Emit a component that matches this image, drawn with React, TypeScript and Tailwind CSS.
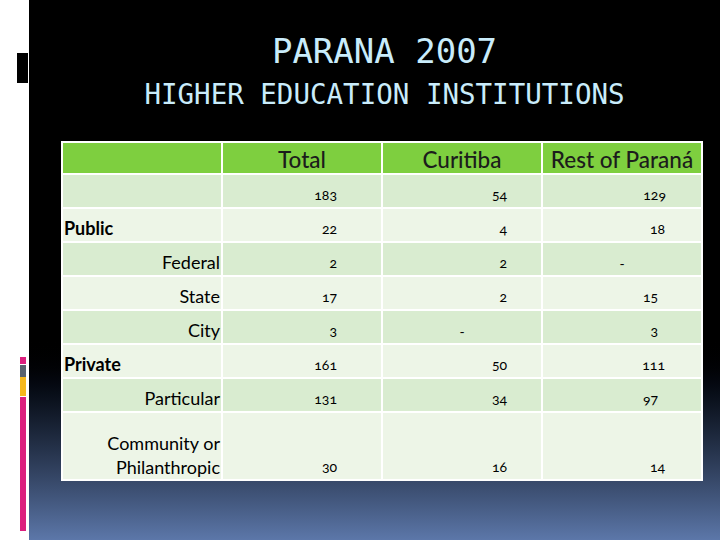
import React from "react";

type Row = {
  label: string;
  group?: boolean;
  total: string;
  curitiba: string;
  rest: string;
  restPad: string;
  dark: boolean;
  tall?: boolean;
};

const ROWS: Row[] = [
  { label: "", total: "183", curitiba: "54", rest: "129", restPad: "pr-[35px]", dark: true },
  { label: "Public", group: true, total: "22", curitiba: "4", rest: "18", restPad: "pr-[36px]", dark: false },
  { label: "Federal", total: "2", curitiba: "2", rest: "-", restPad: "pr-0", dark: true },
  { label: "State", total: "17", curitiba: "2", rest: "15", restPad: "pr-[43px]", dark: false },
  { label: "City", total: "3", curitiba: "-", rest: "3", restPad: "pr-[43px]", dark: true },
  { label: "Private", group: true, total: "161", curitiba: "50", rest: "111", restPad: "pr-[36px]", dark: false },
  { label: "Particular", total: "131", curitiba: "34", rest: "97", restPad: "pr-[43px]", dark: true },
  { label: "Community or\nPhilanthropic", total: "30", curitiba: "16", rest: "14", restPad: "pr-[36px]", dark: false, tall: true },
];

function NumCell({ value, pad, row }: { value: string; pad: string; row: Row }) {
  const isDash = value === "-";
  return (
    <div
      className={`flex items-end text-[14px] leading-none oldstyle-nums ${
        isDash ? "justify-center pb-[4px]" : `justify-end pb-[5px] ${pad}`
      } ${row.dark ? "bg-[#d9ecd0]" : "bg-[#edf5e7]"}`}
    >
      {value}
    </div>
  );
}

export default function App() {
  return (
    <div className="flex h-[540px] w-[720px] overflow-hidden bg-white">
      {/* left edge marks */}
      <aside className="flex w-[29px] shrink-0 flex-col items-end">
        <div className="mr-[1px] mt-[53px] h-[30px] w-[11px] bg-black" />
        <div className="mb-[9px] mr-[3px] mt-auto flex w-[6px] flex-col">
          <div className="h-[7px] bg-[#dc1f7e]" />
          <div className="mt-[1px] h-[12px] bg-[#59626e]" />
          <div className="h-[19px] bg-[#f6b81c]" />
          <div className="mt-[1px] h-[134px] bg-[#dc1f7e]" />
        </div>
      </aside>

      <main className="flex flex-1 flex-col bg-linear-to-b from-black from-62% to-[#5c77a9]">
        <div className="pl-[20px] pt-[34px] text-center font-['DejaVu_Sans_Mono',monospace] text-[#c9ecfb]">
          <h1 className="text-[34px] leading-none">PARANA 2007</h1>
          <h2 className="mt-[13px] text-[27.5px] leading-none">HIGHER EDUCATION INSTITUTIONS</h2>
        </div>

        <div className="ml-[32px] mr-[17px] mt-[32px] grid grid-cols-4 gap-[2px] bg-white p-[2px] font-['Lato',sans-serif] text-black">
          <div className="h-[30px] bg-[#7ecf3f]" />
          {["Total", "Curitiba", "Rest of Paraná"].map((h) => (
            <div
              key={h}
              className="flex h-[30px] items-end justify-center bg-[#7ecf3f] pb-[1px] text-[22.5px] font-medium leading-none text-[#1c1c1c]"
            >
              {h}
            </div>
          ))}

          {ROWS.map((row, i) => (
            <React.Fragment key={i}>
              <div
                className={`flex flex-col whitespace-pre-line leading-[24px] ${
                  row.tall ? "h-[66px] pb-0" : "h-[32px] pb-[1px]"
                } ${row.group ? "items-start justify-end pl-[1px] text-[18px] font-bold" : "items-end justify-end pr-[1px] text-right text-[18px]"} ${
                  row.dark ? "bg-[#d9ecd0]" : "bg-[#edf5e7]"
                }`}
              >
                {row.label}
              </div>
              <NumCell value={row.total} pad="pr-[44px]" row={row} />
              <NumCell value={row.curitiba} pad="pr-[34px]" row={row} />
              <NumCell value={row.rest} pad={row.restPad} row={row} />
            </React.Fragment>
          ))}
        </div>
      </main>
    </div>
  );
}
